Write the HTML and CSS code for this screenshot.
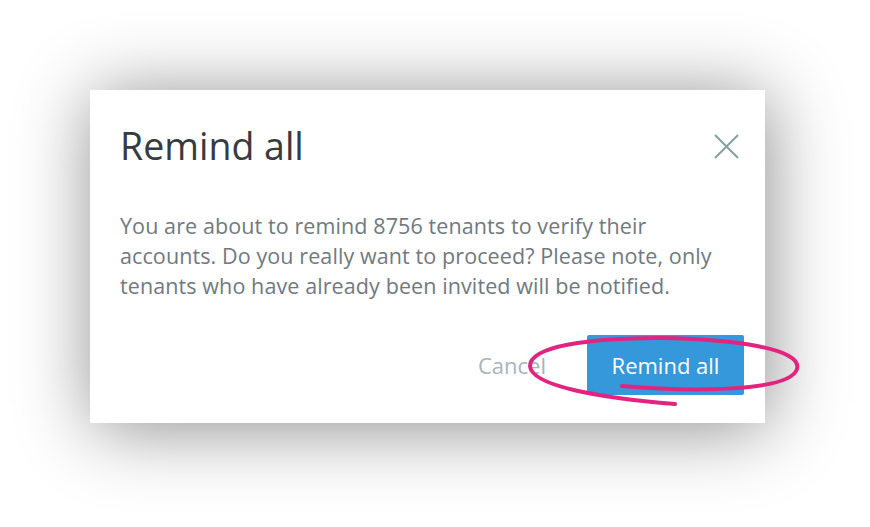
FILE: index.html
```html
<!DOCTYPE html>
<html lang="en">
<head>
  <meta charset="UTF-8">
  <title>Remind all</title>
  <meta name="viewport" content="width=device-width, initial-scale=1.0">
  <link rel="stylesheet" href="styles.css">
</head>
<body>

  <div class="page">
    <div class="modal">
      <div class="modal-header">
        <h2 class="modal-title">Remind all</h2>
        <button class="modal-close" type="button" aria-label="Close">
          <svg width="25" height="25" viewBox="0 0 25 25">
            <path d="M1 1 L24 24 M24 1 L1 24" stroke="#84a0a0" stroke-width="2" fill="none"/>
          </svg>
        </button>
      </div>

      <p class="modal-text">
        You are about to remind 8756 tenants to verify their accounts. Do you really want to proceed? Please note, only tenants who have already been invited will be notified.
      </p>

      <div class="modal-footer">
        <button class="btn-cancel" type="button">Cancel</button>
        <button class="btn-primary" type="button">Remind all</button>
      </div>
    </div>
  </div>

  <!-- hand drawn marker around the button -->
  <svg class="annotation" width="870" height="527" viewBox="0 0 870 527">
    <path d="M622 386 C 690 392, 790 392, 797 369 C 803 348, 730 339, 660 338 C 590 338, 530 346, 530 366 C 531 386, 600 398, 675 404"
          stroke="#e2237f" stroke-width="4" fill="none" stroke-linecap="round"/>
  </svg>

</body>
</html>
```

FILE: styles.css
```css
* {
  box-sizing: border-box;
}

body {
  margin: 0;
  background: #fff;
  font-family: 'Open Sans', sans-serif;
  position: relative;
  width: 870px;
  height: 527px;
  overflow: hidden;
}

.page {
  padding: 90px 0 0 90px;
}

.modal {
  width: 675px;
  height: 333px;
  background: #fff;
  box-shadow: 3px 5px 70px rgba(0,0,0,0.45);
  display: flex;
  flex-direction: column;
}

.modal-header {
  display: flex;
  justify-content: space-between;
  align-items: flex-start;
  padding: 31px 26px 0 30px;
}

.modal-title {
  margin: 0;
  font-size: 37.5px;
  line-height: 50px;
  font-weight: 400;
  color: #363b40;
}

.modal-close {
  border: none;
  background: none;
  padding: 0;
  margin-top: 13px;
  cursor: pointer;
  display: flex;
}

.modal-text {
  margin: 40px 0 0 0;
  padding: 0 35px 0 30px;
  font-size: 21.5px;
  letter-spacing: 0.1px;
  line-height: 30px;
  color: #707980;
}

.modal-footer {
  display: flex;
  justify-content: flex-end;
  align-items: center;
  padding: 0 21px 0 30px;
  margin-top: 34px;
}

.btn-cancel {
  border: none;
  background: none;
  font-family: inherit;
  font-size: 22px;
  color: #aab3b8;
  padding: 0;
  margin-right: 41px;
  cursor: pointer;
}

.btn-primary {
  width: 157px;
  height: 60px;
  padding: 0;
  border: none;
  border-radius: 2px;
  background: #3598db;
  color: #fff;
  font-family: inherit;
  font-size: 22px;
  cursor: pointer;
}

.annotation {
  position: absolute;
  top: 0;
  left: 0;
  pointer-events: none;
}
```
